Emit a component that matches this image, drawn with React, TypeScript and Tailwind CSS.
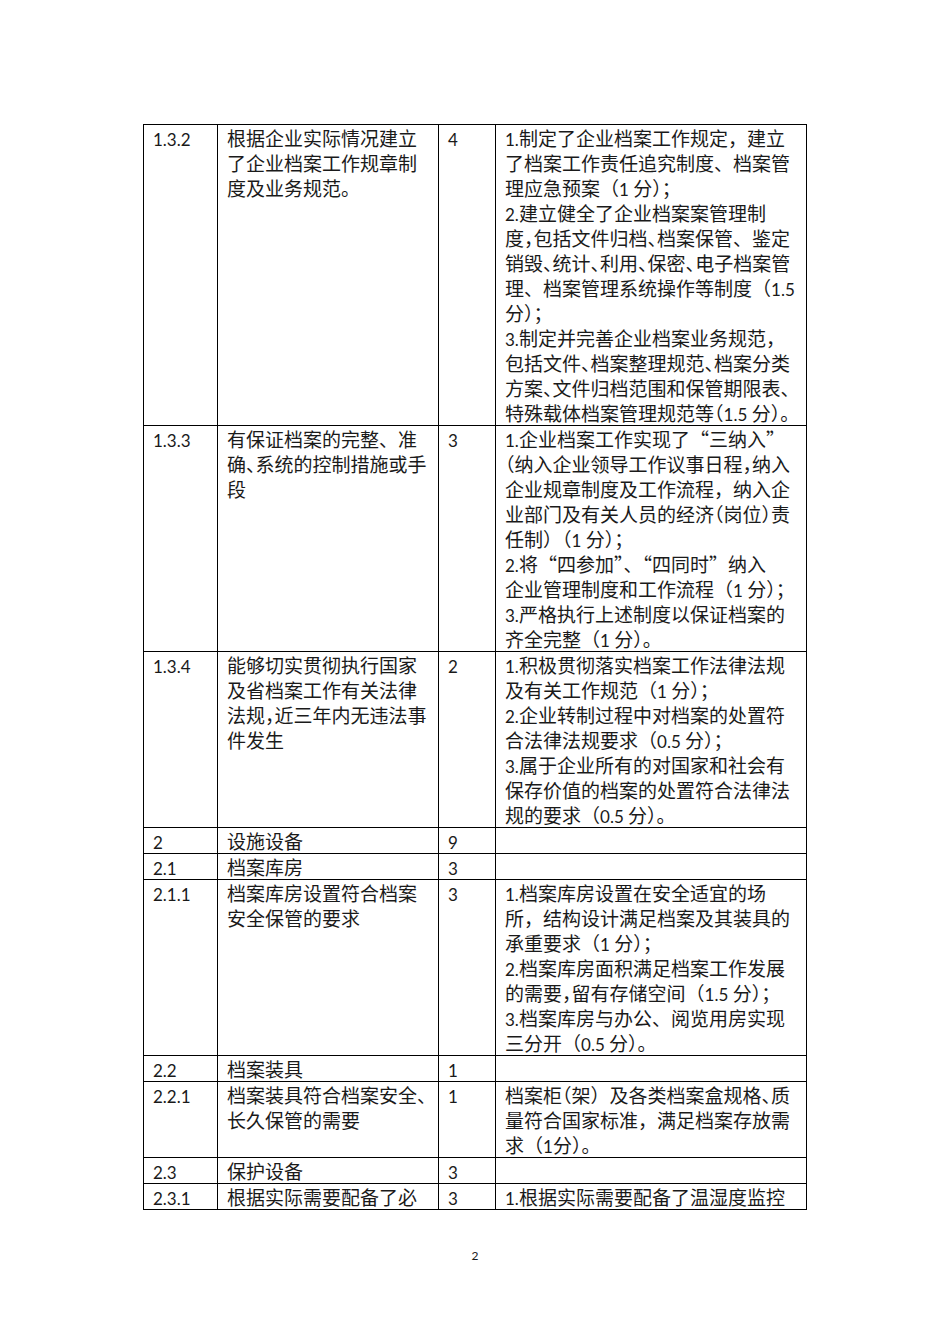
import React from "react";

type Row = { c1: string; c2: string[]; c3: string; c4: string[] };

const rows: Row[] = [
  {
    c1: "1.3.2",
    c2: ["根据企业实际情况建立", "了企业档案工作规章制", "度及业务规范。"],
    c3: "4",
    c4: [
      "1.制定了企业档案工作规定，建立",
      "了档案工作责任追究制度、档案管",
      "理应急预案（1 分）；",
      "2.建立健全了企业档案案管理制",
      "度^，包括文件归档^、档案保管、鉴定",
      "销毁^、统计^、利用^、保密^、电子档案管",
      "理、档案管理系统操作等制度（1.5",
      "分）；",
      "3.制定并完善企业档案业务规范，",
      "包括文件^、档案整理规范^、档案分类",
      "方案^、文件归档范围和保管期限表、",
      "特殊载体档案管理规范等^（1.5 分）。",
    ],
  },
  {
    c1: "1.3.3",
    c2: ["有保证档案的完整、准", "确^、系统的控制措施或手", "段"],
    c3: "3",
    c4: [
      "1.企业档案工作实现了“三纳入”",
      "^（纳入企业领导工作议事日程^，纳入",
      "企业规章制度及工作流程，纳入企",
      "业部门及有关人员的经济^（岗位^）责",
      "任制）（1 分）；",
      "2.将“四参加”、“四同时”纳入",
      "企业管理制度和工作流程（1 分）；",
      "3.严格执行上述制度以保证档案的",
      "齐全完整（1 分）。",
    ],
  },
  {
    c1: "1.3.4",
    c2: ["能够切实贯彻执行国家", "及省档案工作有关法律", "法规^，近三年内无违法事", "件发生"],
    c3: "2",
    c4: [
      "1.积极贯彻落实档案工作法律法规",
      "及有关工作规范（1 分）；",
      "2.企业转制过程中对档案的处置符",
      "合法律法规要求（0.5 分）；",
      "3.属于企业所有的对国家和社会有",
      "保存价值的档案的处置符合法律法",
      "规的要求（0.5 分）。",
    ],
  },
  { c1: "2", c2: ["设施设备"], c3: "9", c4: [] },
  { c1: "2.1", c2: ["档案库房"], c3: "3", c4: [] },
  {
    c1: "2.1.1",
    c2: ["档案库房设置符合档案", "安全保管的要求"],
    c3: "3",
    c4: [
      "1.档案库房设置在安全适宜的场",
      "所，结构设计满足档案及其装具的",
      "承重要求（1 分）；",
      "2.档案库房面积满足档案工作发展",
      "的需要^，留有存储空间（1.5 分）；",
      "3.档案库房与办公、阅览用房实现",
      "三分开（0.5 分）。",
    ],
  },
  { c1: "2.2", c2: ["档案装具"], c3: "1", c4: [] },
  {
    c1: "2.2.1",
    c2: ["档案装具符合档案安全、", "长久保管的需要"],
    c3: "1",
    c4: ["档案柜^（架）及各类档案盒规格^、质", "量符合国家标准，满足档案存放需", "求（1分）。"],
  },
  { c1: "2.3", c2: ["保护设备"], c3: "3", c4: [] },
  {
    c1: "2.3.1",
    c2: ["根据实际需要配备了必"],
    c3: "3",
    c4: ["1.根据实际需要配备了温湿度监控"],
  },
];

const isAscii = (c: string) => /[\x20-\x7e]/.test(c);

type Ch = { ch: string; ascii: boolean; tight: boolean; lead: boolean };

function Line({ t }: { t: string }) {
  const chars: Ch[] = [];
  for (let i = 0; i < t.length; i++) {
    if (t[i] === "^") {
      const c = t[i + 1];
      const open = c === "（" || c === "“";
      if (open) {
        if (chars.length > 0) {
          chars[chars.length - 1].tight = true;
          chars.push({ ch: c, ascii: false, tight: false, lead: false });
        } else {
          chars.push({ ch: c, ascii: false, tight: false, lead: true });
        }
      } else {
        chars.push({ ch: c, ascii: false, tight: true, lead: false });
      }
      i++;
      continue;
    }
    chars.push({ ch: t[i], ascii: isAscii(t[i]), tight: false, lead: false });
  }
  const groups: { text: string; ascii: boolean; tight: boolean; lead: boolean }[] = [];
  for (const c of chars) {
    const g = groups[groups.length - 1];
    if (g && g.ascii === c.ascii && g.tight === c.tight && g.lead === c.lead && !c.tight && !c.lead) {
      g.text += c.ch;
    } else {
      groups.push({ text: c.ch, ascii: c.ascii, tight: c.tight, lead: c.lead });
    }
  }
  return (
    <div className="h-[25px] whitespace-nowrap">
      {groups.map((g, k) => {
        if (g.ascii)
          return (
            <span key={k} className="[font-family:Lato,sans-serif] text-[17px] leading-none">
              {g.text}
            </span>
          );
        if (g.tight)
          return (
            <span key={k} className="tracking-[-0.5em]">
              {g.text}
            </span>
          );
        if (g.lead)
          return (
            <span key={k} className="ml-[-0.5em]">
              {g.text}
            </span>
          );
        return <span key={k}>{g.text}</span>;
      })}
    </div>
  );
}

export default function App() {
  return (
    <div className="w-[950px] min-h-[1344px] bg-white text-[#1a1a1a] [font-family:'Noto_Sans_CJK_SC',sans-serif] text-[19px] leading-[25px]">
      <div className="pt-[124px] pl-[143px]">
        <table className="table-fixed border-collapse w-[663px] border border-black">
          <colgroup>
            <col className="w-[74px]" />
            <col className="w-[221px]" />
            <col className="w-[57px]" />
            <col className="w-[311px]" />
          </colgroup>
          <tbody>
            {rows.map((r) => (
              <tr key={r.c1}>
                <td className="border border-black align-top px-[9px] py-0">
                  <Line t={r.c1} />
                </td>
                <td className="border border-black align-top px-[9px] py-0">
                  {r.c2.map((l, k) => (
                    <Line key={k} t={l} />
                  ))}
                </td>
                <td className="border border-black align-top px-[9px] py-0">
                  <Line t={r.c3} />
                </td>
                <td className="border border-black align-top px-[9px] py-0">
                  {r.c4.map((l, k) => (
                    <Line key={k} t={l} />
                  ))}
                </td>
              </tr>
            ))}
          </tbody>
        </table>
      </div>
      <div className="mt-[38px] text-center [font-family:Lato,sans-serif] text-[12px] leading-[16px]">
        2
      </div>
    </div>
  );
}
